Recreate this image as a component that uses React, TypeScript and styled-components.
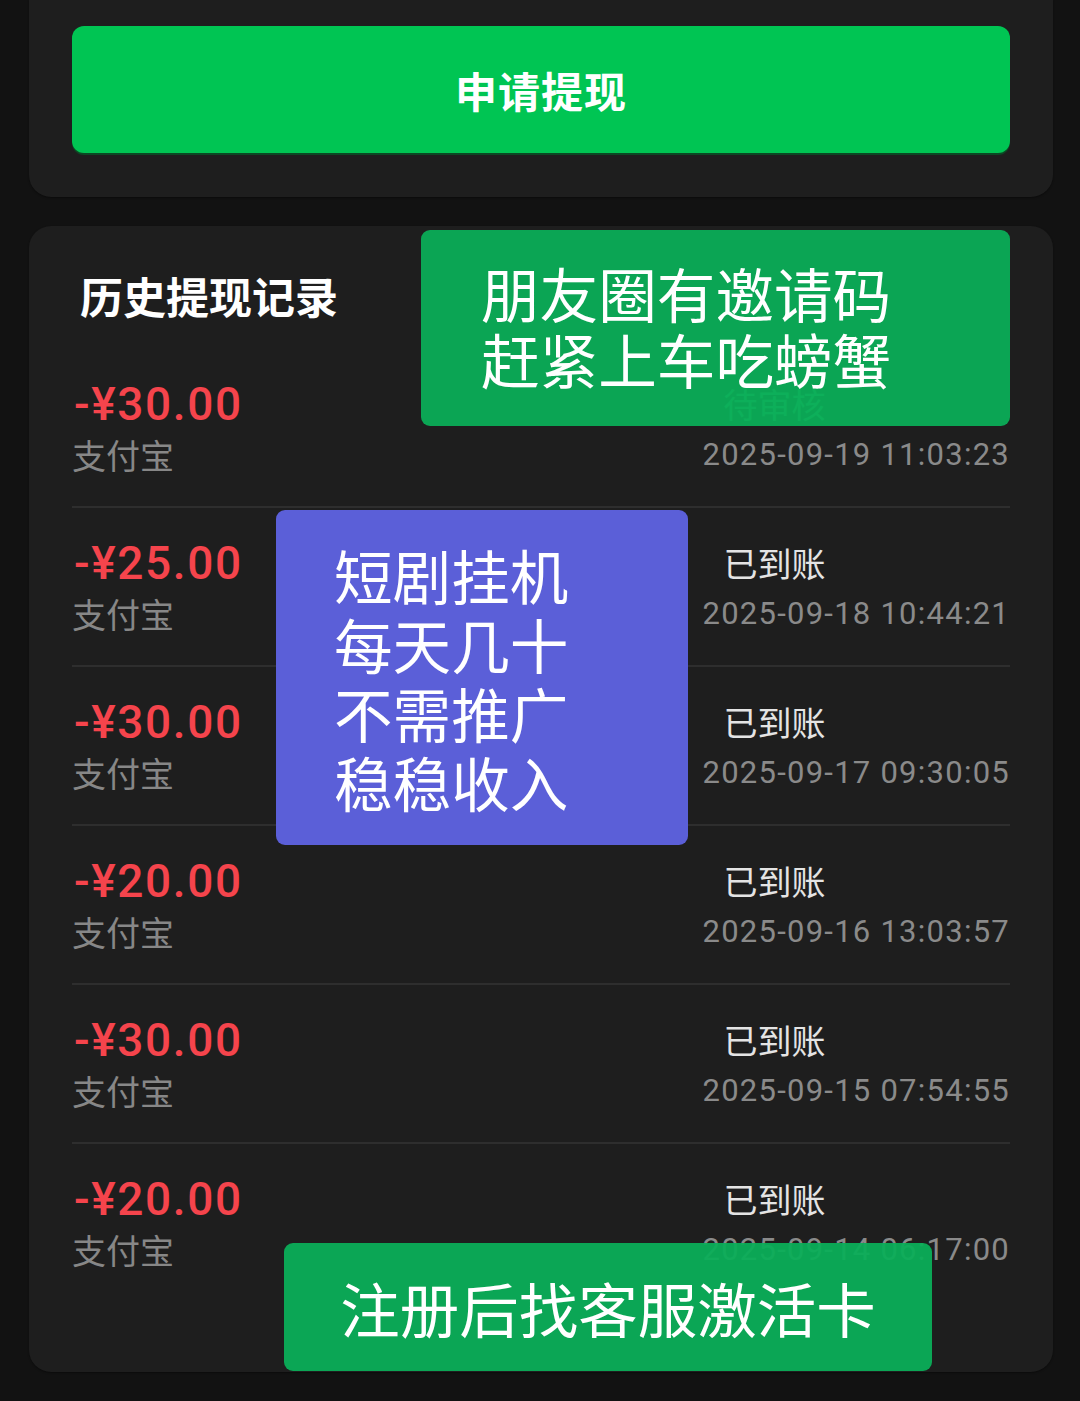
import React, { ReactElement } from "react";
import styled, { createGlobalStyle } from "styled-components";

const GlobalStyle = createGlobalStyle`
    html, body {
        margin: 0;
        padding: 0;
        background: #121212;
    }
    body {
        font-family: Roboto, "Noto Sans CJK SC", "Noto Sans", sans-serif;
        -webkit-font-smoothing: antialiased;
    }
`;

const Page = styled.div`
    position: relative;
    width: 1080px;
    min-height: 1401px;
    padding: 0 27px 31px 29px;
    box-sizing: border-box;
    display: flex;
    flex-direction: column;
    gap: 29px;
`;

const Card = styled.section<{ $flatTop?: boolean }>`
    background: #1e1e1e;
    border-radius: ${(p) => (p.$flatTop ? "0 0 22px 22px" : "22px")};
    box-shadow: 0 1px 2px rgba(0, 0, 0, 0.4);
    padding: ${(p) => (p.$flatTop ? "26px 43px 44px" : "45px 43px 70px")};
`;

const WithdrawButton = styled.button`
    display: block;
    width: 100%;
    height: 127px;
    border: none;
    border-radius: 12px;
    background: #00c553;
    box-shadow: 0 2px 0 rgba(0, 100, 40, 0.6);
    color: #fff;
    font-family: "Noto Sans CJK SC", sans-serif;
    font-size: 42px;
    font-weight: 700;
    letter-spacing: 1px;
`;

const Title = styled.h2`
    margin: 0 0 30px 8px;
    color: #fff;
    font-family: "Noto Sans CJK SC", sans-serif;
    font-size: 43px;
    font-weight: 700;
    line-height: 48px;
`;

const Row = styled.div<{ $last?: boolean }>`
    display: flex;
    justify-content: space-between;
    padding: 29px 0 ${(p) => (p.$last ? "27px" : "26px")};
    border-bottom: ${(p) => (p.$last ? "none" : "2px solid #2e2e2e")};
`;

const Left = styled.div`
    display: flex;
    flex-direction: column;
`;

const Amount = styled.div`
    padding-left: 2px;
    color: #f5444c;
    font-size: 46px;
    font-weight: 500;
    line-height: 52px;
    letter-spacing: 1.6px;
`;

const Method = styled.div`
    color: #878787;
    font-family: "Noto Sans CJK SC", sans-serif;
    font-size: 34px;
    line-height: 50px;
`;

const Right = styled.div`
    display: flex;
    flex-direction: column;
    align-items: flex-start;
`;

const Status = styled.div<{ $pending?: boolean }>`
    padding-left: 21px;
    color: ${(p) => (p.$pending ? "#3fbf72" : "#e4e4e4")};
    font-family: "Noto Sans CJK SC", sans-serif;
    font-size: 34px;
    line-height: 52px;
`;

const DateText = styled.div`
    color: #8a8a8a;
    font-size: 31px;
    line-height: 50px;
    letter-spacing: 1.25px;
`;

const Sticker = styled.div<{ $bg: string; $center?: boolean }>`
    position: absolute;
    box-sizing: border-box;
    display: flex;
    flex-direction: column;
    justify-content: center;
    align-items: ${(p) => (p.$center ? "center" : "flex-start")};
    background: ${(p) => p.$bg};
    border-radius: 9px;
    color: #fff;
    font-family: "Noto Sans CJK SC", sans-serif;
    font-size: 58.6px;
    font-weight: 400;
    white-space: nowrap;
`;

const InviteSticker = styled(Sticker)`
    left: 421px;
    top: 230px;
    width: 589px;
    height: 196px;
    padding-left: 60px;
    padding-bottom: 4px;
    line-height: 66px;
`;

const DramaSticker = styled(Sticker)`
    left: 276px;
    top: 510px;
    width: 412px;
    height: 335px;
    padding-left: 58px;
    line-height: 69px;
`;

const ActivateSticker = styled(Sticker)`
    left: 284px;
    top: 1243px;
    width: 648px;
    height: 128px;
    font-size: 59.5px;
    line-height: 66px;
`;

interface Record {
    amount: string;
    status: string;
    time: string;
}

const records: Record[] = [
    { amount: "-¥30.00", status: "待审核", time: "2025-09-19 11:03:23" },
    { amount: "-¥25.00", status: "已到账", time: "2025-09-18 10:44:21" },
    { amount: "-¥30.00", status: "已到账", time: "2025-09-17 09:30:05" },
    { amount: "-¥20.00", status: "已到账", time: "2025-09-16 13:03:57" },
    { amount: "-¥30.00", status: "已到账", time: "2025-09-15 07:54:55" },
    { amount: "-¥20.00", status: "已到账", time: "2025-09-14 06:17:00" }
];

const App = (): ReactElement => (
    <>
        <GlobalStyle />
        <Page>
            <Card $flatTop>
                <WithdrawButton type="button">申请提现</WithdrawButton>
            </Card>
            <Card>
                <Title>历史提现记录</Title>
                {records.map((r, i) => (
                    <Row key={r.time} $last={i === records.length - 1}>
                        <Left>
                            <Amount>{r.amount}</Amount>
                            <Method>支付宝</Method>
                        </Left>
                        <Right>
                            <Status $pending={r.status === "待审核"}>{r.status}</Status>
                            <DateText>{r.time}</DateText>
                        </Right>
                    </Row>
                ))}
            </Card>

            <InviteSticker $bg="rgba(11, 174, 88, 0.94)">
                <div>朋友圈有邀请码</div>
                <div>赶紧上车吃螃蟹</div>
            </InviteSticker>
            <DramaSticker $bg="#5b5fd8">
                <div>短剧挂机</div>
                <div>每天几十</div>
                <div>不需推广</div>
                <div>稳稳收入</div>
            </DramaSticker>
            <ActivateSticker $bg="rgba(11, 174, 88, 0.95)" $center>
                注册后找客服激活卡
            </ActivateSticker>
        </Page>
    </>
);

export default App;
